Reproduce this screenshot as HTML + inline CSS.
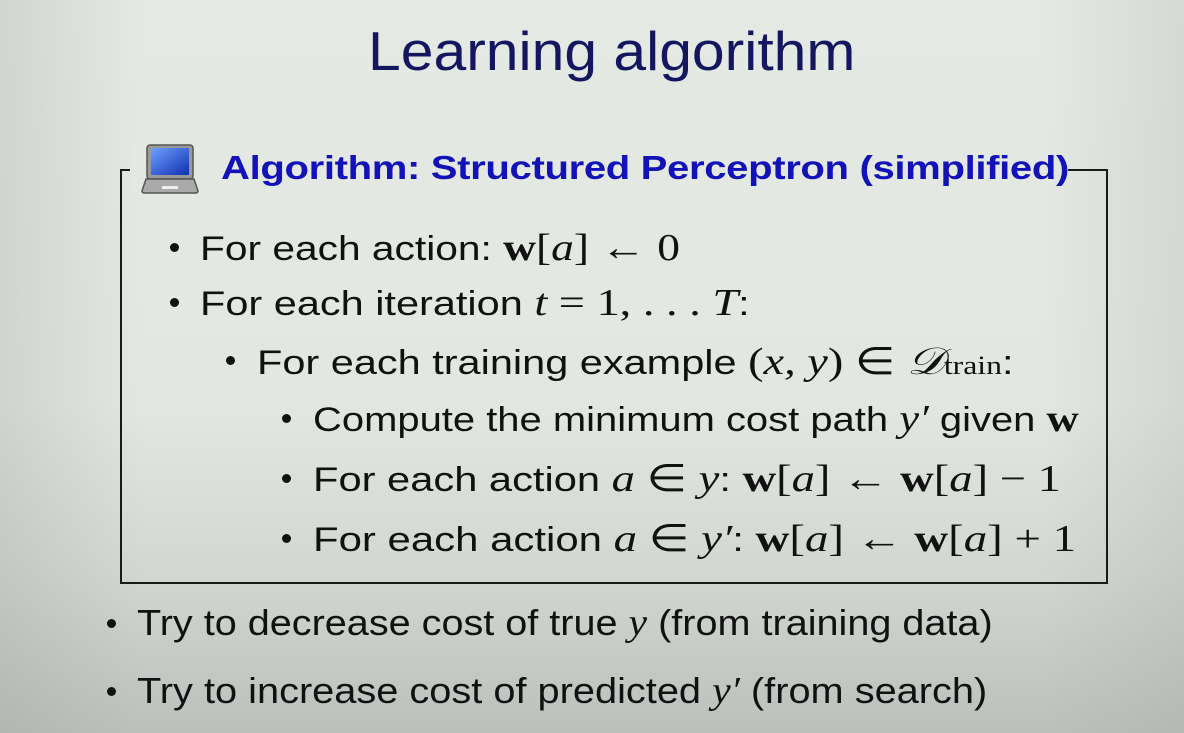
<!DOCTYPE html>
<html><head><meta charset="utf-8"><style>
html,body{margin:0;padding:0}
body{width:1184px;height:733px;overflow:hidden;position:relative;font-family:"Liberation Sans",sans-serif;
background:linear-gradient(180deg,#e5e9e3 0%,#e3e7e1 55%,#d3d7d2 78%,#bcc0bc 100%);}
.vig{position:absolute;inset:0;background:linear-gradient(90deg,rgba(150,155,150,.25) 0%,rgba(0,0,0,0) 12%,rgba(0,0,0,0) 88%,rgba(150,155,150,.2) 100%);}
.t{position:absolute;white-space:nowrap;color:#111;font-size:34px;line-height:1;transform-origin:0 50%}
.m{font-family:"Liberation Serif",serif;font-style:italic;font-size:38px}
.r{font-family:"Liberation Serif",serif;font-size:38px}
.b{font-family:"Liberation Serif",serif;font-weight:bold;font-size:38px}
.dot{position:absolute;width:9px;height:9px;border-radius:50%;background:#111}
</style></head><body>
<div class="vig"></div>
<div class="t" style="left:368px;top:24px;font-size:55px;color:#141660;transform:scaleX(1.07)">Learning algorithm</div>
<div style="position:absolute;left:120px;top:169px;width:984px;height:413px;border:2px solid #1a1a1a;border-top:none"></div>
<div style="position:absolute;left:120px;top:169px;width:10px;height:2px;background:#1a1a1a"></div>
<div style="position:absolute;left:1068px;top:169px;width:38px;height:2px;background:#1a1a1a"></div>
<div style="position:absolute;left:130px;top:140px;width:86px;height:56px;background:#e4e8e2"></div>
<svg style="position:absolute;left:140px;top:143px" width="60" height="52" viewBox="0 0 60 52">
<defs><linearGradient id="s" x1="0" y1="0" x2="1" y2="1"><stop offset="0" stop-color="#6fa0ff"/><stop offset="1" stop-color="#1030b0"/></linearGradient></defs>
<rect x="7" y="2" width="46" height="34" rx="3" fill="#999" stroke="#555" stroke-width="1.5"/>
<rect x="11" y="5" width="38" height="27" fill="url(#s)"/>
<path d="M6 36 L54 36 L58 48 Q58 50 55 50 L5 50 Q2 50 2 48 Z" fill="#aaa" stroke="#555" stroke-width="1.5"/>
<rect x="22" y="43" width="16" height="3" fill="#eee"/>
</svg>
<div class="t" style="left:221px;top:151px;font-size:33px;font-weight:bold;color:#1212b8;letter-spacing:-0.3px;transform:scaleX(1.215)">Algorithm: Structured Perceptron (simplified)</div>

<div class="dot" style="left:170px;top:243px"></div>
<div class="t" style="left:200px;top:229px;transform:scaleX(1.197)">For each action: <span class="b">w</span><span class="r">[</span><span class="m">a</span><span class="r">] ← 0</span></div>
<div class="dot" style="left:170px;top:298px"></div>
<div class="t" style="left:200px;top:284px;transform:scaleX(1.22)">For each iteration <span class="m">t</span> <span class="r">= 1, . . .</span> <span class="m">T</span>:</div>
<div class="dot" style="left:226px;top:356px"></div>
<div class="t" style="left:257px;top:342px;transform:scaleX(1.22)">For each training example <span class="r">(</span><span class="m">x, y</span><span class="r">) ∈</span> <span class="m" style="font-family:'DejaVu Serif',serif">𝒟</span><span class="r" style="font-size:26px">train</span>:</div>
<div class="dot" style="left:282px;top:414px"></div>
<div class="t" style="left:313px;top:400px;transform:scaleX(1.175)">Compute the minimum cost path <span class="m">y′</span> given <span class="b">w</span></div>
<div class="dot" style="left:282px;top:474px"></div>
<div class="t" style="left:313px;top:460px;transform:scaleX(1.225)">For each action <span class="m">a</span> <span class="r">∈</span> <span class="m">y</span>: <span class="b">w</span><span class="r">[</span><span class="m">a</span><span class="r">] ←</span> <span class="b">w</span><span class="r">[</span><span class="m">a</span><span class="r">] − 1</span></div>
<div class="dot" style="left:282px;top:534px"></div>
<div class="t" style="left:313px;top:520px;transform:scaleX(1.233)">For each action <span class="m">a</span> <span class="r">∈</span> <span class="m">y′</span>: <span class="b">w</span><span class="r">[</span><span class="m">a</span><span class="r">] ←</span> <span class="b">w</span><span class="r">[</span><span class="m">a</span><span class="r">] + 1</span></div>

<div class="dot" style="left:107px;top:619px"></div>
<div class="t" style="left:137px;top:604px;font-size:36px;transform:scaleX(1.10)">Try to decrease cost of true <span class="m">y</span> (from training data)</div>
<div class="dot" style="left:107px;top:687px"></div>
<div class="t" style="left:137px;top:672px;font-size:36px;transform:scaleX(1.104)">Try to increase cost of predicted <span class="m">y′</span> (from search)</div>
</body></html>
